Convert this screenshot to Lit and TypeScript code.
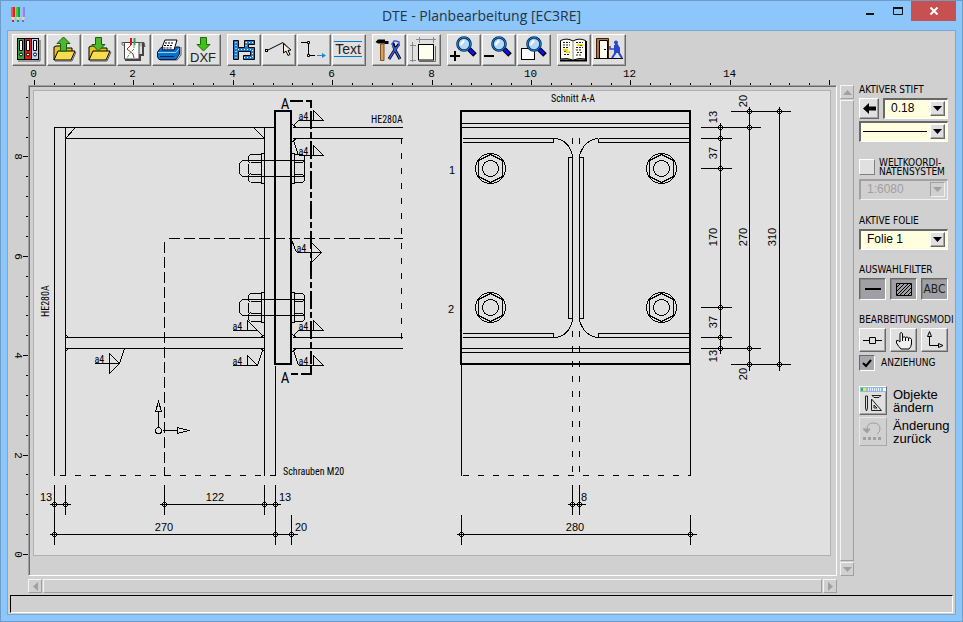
import { LitElement, html, svg, css, type TemplateResult } from "lit";
import { customElement, property } from "lit/decorators.js";

type Tool = { name: string; art: TemplateResult };

const lens = svg`
  <path d="M22 15L28 21" stroke="#000" stroke-width="5"/>
  <path d="M22 15L27 20" stroke="#1010f0" stroke-width="3"/>
  <circle cx="17" cy="10" r="6.5" fill="#b4d8f8" stroke="#0a2a5a" stroke-width="2.6"/>
  <circle cx="17" cy="10" r="6.5" fill="none" stroke="#1a88d8" stroke-width="1"/>
  <path d="M13 10l3-4 2 1-4 5z" fill="#fff"/>`;

const folder = svg`
  <path d="M7 26V13l2-1h4l2 2h10v3" fill="#e8c020" stroke="#000"/>
  <path d="M7 26L11 17H28L24 26Z" fill="#f8dc50" stroke="#000"/>
  <path d="M8 27H25L29 18" fill="none" stroke="#555"/>`;

const groups: Tool[][] = [
  [
    {
      name: "Projekte",
      art: svg`
        <path d="M6 27H28V6" fill="none" stroke="#555"/>
        <rect x="5.5" y="4.5" width="7" height="21" fill="#3fa03f" stroke="#000"/>
        <rect x="12.5" y="4.5" width="7" height="21" fill="#f01414" stroke="#000"/>
        <rect x="19.5" y="4.5" width="7" height="21" fill="#b4d4ff" stroke="#000"/>
        <path d="M7.5 6.5h3v10h-3zM14.5 6.5h3v10h-3zM21.5 6.5h3v10h-3z" fill="#fff" stroke="#000"/>
        <circle cx="9" cy="20.5" r="1.5" fill="#fff" stroke="#000"/>
        <circle cx="16" cy="20.5" r="1.5" fill="#fff" stroke="#000"/>
        <circle cx="23" cy="20.5" r="1.5" fill="#fff" stroke="#000"/>`,
    },
    {
      name: "Laden",
      art: svg`${folder}<path d="M16.5 3L23 9.5H19.5V17H13.5V9.5H10Z" fill="#4cb82c" stroke="#1c5c10"/>`,
    },
    {
      name: "Speichern",
      art: svg`${folder}<path d="M16.5 17L23 10.5H19.5V3.5H13.5V10.5H10Z" fill="#4cb82c" stroke="#1c5c10"/>`,
    },
    {
      name: "Plotten",
      art: svg`
        <path d="M5 8.5H27l1 4h-3" fill="#bbb" stroke="#555"/>
        <path d="M5 8v3h3" fill="none" stroke="#777"/>
        <path d="M8 26H23V21H26V9" fill="none" stroke="#444" stroke-width="2"/>
        <path d="M7.5 8.5H22V25H7.5Z" fill="#fff" stroke="#444"/>
        <path d="M14 4V11" stroke="#e01010" stroke-width="2"/><path d="M17.5 4V11" stroke="#30a050" stroke-width="2"/>
        <path d="M14 11l-4 4 6 5 1 4" fill="none" stroke="#e01010"/>
        <path d="M17 11v4l-4 4-3 5" fill="none" stroke="#30b060" stroke-dasharray="3 1"/>`,
    },
    {
      name: "Drucken",
      art: svg`
        <path d="M8 26H25L29 21V13" fill="none" stroke="#555"/>
        <path d="M9 16L13 6H25L22 16Z" fill="#fff" stroke="#000"/>
        <path d="M13 9h9M12 11.5h9M11.5 14h8" stroke="#000" stroke-dasharray="2 1"/>
        <path d="M5.5 18L9 13.5H11L10 16H22L24 13H27.5V20L24 25.5H7L5.5 23Z" fill="#0a70c8" stroke="#0a1a50"/>
        <path d="M6 18.5H24L27 14.5" fill="none" stroke="#8cd0ff"/><path d="M8 22.5H22" stroke="#0a1a50"/>`,
    },
    {
      name: "DXF",
      art: svg`
        <path d="M16.5 17L23 10.5H19.5V3.5H13.5V10.5H10Z" fill="#40c010" stroke="#1c6c08"/>
        <text x="16" y="28" font-size="13" text-anchor="middle" fill="#222">DXF</text>`,
    },
  ],
  [
    {
      name: "Schraffur",
      art: svg`
        <path d="M6.5 6.5h5v7h6v-7h10v4h-6v3h6v12h-11v-4h7v-4h-12v8h-5z" fill="#1c7cd0" stroke="#000"/>
        <path d="M9 8v16M11 15.500h14M19 8v6M19 8.500h7M25.500 16v8M17 23.500h9" fill="none" stroke="#fff" stroke-dasharray="1 2"/>`,
    },
    {
      name: "Linie",
      art: svg`
        <path d="M6 16L21 8.5L26 14" fill="none" stroke="#000"/>
        <rect x="3.5" y="15.5" width="2" height="2" fill="#fff" stroke="#000"/>
        <path d="M21.5 9.5V19L24 17L26 21.5L28 20.5L26 16.5L29 16Z" fill="#f4ecd8" stroke="#000"/>`,
    },
    {
      name: "Polygon",
      art: svg`
        <path d="M4 8.5H11.5V21.5H18" fill="none" stroke="#000"/>
        <path d="M10.5 7.5h2v2h-2zM10.5 20.5h2v2h-2z" fill="#fff" stroke="#000"/>
        <path d="M20 21.5H27" stroke="#1a88d8"/><path d="M25 19L29 21.5L25 24Z" fill="#1a88d8"/>`,
    },
    {
      name: "Text",
      art: svg`
        <path d="M2 7.5H30M2 22.5H30" stroke="#0a78c8"/>
        <text x="16" y="20" font-size="14" text-anchor="middle" fill="#222">Text</text>`,
    },
  ],
  [
    {
      name: "Werkzeuge",
      art: svg`
        <path d="M3.5 8L6 5.5H13V7H16.5V10H13L12 9.5H6Z" fill="#000"/>
        <path d="M8.5 10h3.5V26.5H8.5Z" fill="#d8a060" stroke="#805020"/>
        <path d="M21 9l1 4 1 3 5 9M27 10l-5 7-5 8" fill="none" stroke="#000" stroke-width="3"/>
        <path d="M24 7h-2l-2 3 2 4 2 0M24 7l3 1v3l-5 6-5 8M22 14l6 11" fill="none" stroke="#3858e0" stroke-width="1.5"/>`,
    },
    {
      name: "Blattformat",
      art: svg`
        <path d="M9 5.5H29M12.5 3v6M26.5 3v6M5.5 8V28M3 11.5h6M3 26.5h6" stroke="#888"/>
        <path d="M12 27.5H28.5V12" fill="none" stroke="#666"/>
        <rect x="11.5" y="10.5" width="15" height="15.5" fill="#fffff0" stroke="#000"/>`,
    },
  ],
  [
    { name: "Vergrößern", art: svg`${lens}<path d="M3 22H13M8 17V27" stroke="#000" stroke-width="2"/>` },
    { name: "Verkleinern", art: svg`${lens}<path d="M2 22H12" stroke="#000" stroke-width="2"/>` },
    {
      name: "Ausschnitt",
      art: svg`<rect x="4.5" y="14.5" width="13" height="11" fill="#fff" stroke="#000"/>${lens}`,
    },
  ],
  [
    {
      name: "Handbuch",
      art: svg`
        <path d="M3 26.5H29V7" fill="none" stroke="#000" stroke-width="2"/>
        <path d="M3.5 6.5Q10 3.5 16 7Q22 3.5 28.5 6.5V25Q22 23.5 16 26Q10 23.5 3.5 25Z" fill="#fffff4" stroke="#000"/>
        <path d="M16 7V26" stroke="#888"/>
        <path d="M6 8.5h7M6 11h7M6 13.5h5M7 20.5h6M19 8.5h7M19 13.5h7M19 16h6M20 18.5h6M19 21h5" stroke="#222" stroke-dasharray="2 1"/>
        <path d="M6 16h5M9 18h4M20 11h6" stroke="#f0e000" stroke-width="2"/><path d="M7 17.5h2M23 11.5h2" stroke="#e02020"/>`,
    },
    {
      name: "Beenden",
      art: svg`
        <path d="M2 24.5H31" stroke="#000"/>
        <path d="M4.5 24V4.5H16.5V24" fill="#b07840" stroke="#402008"/>
        <path d="M7.5 24V6.5H15.5V24" fill="#fffff4" stroke="#000"/><path d="M12 15.5h2" stroke="#000"/>
        <path d="M18 12v3h5" fill="none" stroke="#2848c8" stroke-width="1.5"/>
        <circle cx="24" cy="8.5" r="2" fill="#2848c8"/>
        <path d="M23 11h2l2 3v5l3 5M24 18l-2 3-2 3" fill="none" stroke="#2848c8" stroke-width="2"/>
        <path d="M22 11h4v8h-4z" fill="#2848c8"/>`,
    },
  ],
];

/* One weld mark: flag line with its triangle, the throat size and the leader to the seam. */
const weld = (x: number, y: number, leader: string, both = false) => svg`
  <path d="M${x} ${y}h25M${x + 15} ${y}v-10l10 10${both ? `l-10 10v-10` : ""}${leader}"/>
  <text class="tight" x=${x} y=${y - 1}>a4</text>`;

const bolt = (y: number) => svg`
  <path d="M248 ${y - 8}h-6l-3 3v10l3 3h6M248 ${y - 8}H304M248 ${y + 8}H304
    M250 ${y - 14}H261M250 ${y + 14}H261M250 ${y - 14}l-2 2v5l2 2M250 ${y + 14}l-2 -2v-5l2 -2M248 ${y - 5}v10
    M250 ${y - 6}H261M250 ${y + 6}H261
    M261 ${y - 15}h3v30h-3zM291 ${y - 15}h3v30h-3z
    M294 ${y - 14}h8l2 2v24l-2 2h-8M294 ${y - 6}h8l2 -2M294 ${y + 6}h8l2 2"/>`;

const boltHead = (x: number, y: number) => svg`
  <circle cx=${x} cy=${y} r="15"/><circle cx=${x} cy=${y} r="8"/>
  <path d="M${x} ${y - 14}l12 6v16l-12 6l-12 -6v-16z"/>`;

const dots: [number, number][] = [
  [54, 504], [65, 504], [164, 504], [264, 504], [275, 504], [54, 534], [275, 534], [291, 534],
  [572, 504], [579, 504], [461, 534], [690, 534],
  [720, 127], [720, 138], [720, 168], [720, 307], [720, 337], [720, 348],
  [749, 111], [749, 127], [749, 348], [749, 364], [779, 111], [779, 364],
];

const across: [string, number, number][] = [
  ["13", 46, 501], ["122", 215, 501], ["13", 285, 501], ["270", 164, 531], ["20", 301, 531],
  ["8", 584, 501], ["280", 575, 531], ["1", 452, 174], ["2", 451, 313],
];

const upright: [string, number, number][] = [
  ["13", 717, 117], ["37", 717, 153], ["170", 717, 237], ["37", 717, 322], ["13", 717, 356],
  ["20", 747, 101], ["270", 747, 237], ["20", 747, 374], ["310", 776, 237],
];

@customElement("plan-ruler")
class PlanRuler extends LitElement {
  @property({ type: Boolean }) vertical = false;
  static styles = css`
    :host { display: block; overflow: hidden; }
    svg { display: block; width: 100%; height: 100%; }
    path { stroke: #000; shape-rendering: crispEdges; }
    text { font: 11px "Liberation Mono", monospace; text-anchor: middle; }
  `;
  render() {
    const step = 19.88;
    const count = this.vertical ? 24 : 41;
    const ticks = Array.from({ length: count }, (_, i) => {
      const major = i % 5 === 0;
      const len = major ? 5 : 2;
      if (this.vertical) {
        const y = Math.round(469 - i * step) + 0.5;
        return svg`<path d="M${20 - len} ${y}H20"/>
          ${major ? svg`<text transform="translate(7 ${y}) rotate(90)">${(i / 5) * 2}</text>` : ""}`;
      }
      const x = Math.round(6 + i * step) + 0.5;
      return svg`<path d="M${x} ${19 - len}V19"/>
        ${major && i < 40 ? svg`<text x=${x - 1} y="11">${(i / 5) * 2}</text>` : ""}`;
    });
    return html`<svg aria-hidden="true">${ticks}</svg>`;
  }
}

@customElement("plan-drawing")
class PlanDrawing extends LitElement {
  static styles = css`
    :host { display: block; overflow: hidden; }
    svg { display: block; width: 100%; height: 100%; }
    path, circle { fill: none; stroke: #000; shape-rendering: crispEdges; }
    .heavy path { stroke-width: 2; }
    .d6 { stroke-dasharray: 6 9; }
    .d11 { stroke-dasharray: 11 4; }
    .cut { stroke-dasharray: 18 3 6 3; }
    .open { fill: #e0e0e0; }
    text { font: 11px "Liberation Sans", sans-serif; }
    .mid { text-anchor: middle; }
    .tight { font: 10px "Roboto Condensed", "Open Sans Condensed", "Noto Sans Condensed", "Liberation Sans", sans-serif; }
    .mark { font-size: 15px; }
  `;
  render() {
    return html`<svg role="img" aria-label="Anschlussplan">
      <g transform="translate(-33.5 -90.5)">
        <path d="M54 475V127H274M65 127V475M65 138H264M65 138L74 128M254 128L264 138M264 127V475M275 365V475"/>
        <path d="M292 127H402M292 138H402M65 337H264M65 348H264M292 337H402M292 348H402M65 334l3 3M65 351l3 -3"/>
        <path d="M264 334l-4 3M264 351l-4 -3M292 334l4 3M292 351l4 -3M292 124l4 3M292 141l4 -3"/>
        <path class="d6" d="M401 137V348"/>
        <path class="d11" d="M168 238H402M164 241V475"/>
        <path class="d6" d="M59 475H275M462 475H690M572 330V475M579 330V475"/>
        <path d="M572 137v6M579 137v6"/>
        ${bolt(168)}${bolt(307)}
        ${weld(298, 120, "M298 120l-6 6")} ${weld(298, 155, "M298 155l-5 -15")}
        ${weld(296, 252, "M296 252l-5 -13", true)} ${weld(298, 330, "M298 330l-6 6")}
        ${weld(298, 365, "M298 365l-5 -15")} ${weld(232, 330, "M257 330l6 6")}
        ${weld(232, 365, "M257 365l5 -15")} ${weld(94, 363, "M119 363l5 -15", true)}
        <path d="M158 427V411M162 430H177"/>
        <path class="open" d="M155 411h6l-3 -10zM177 427v6l11 -3z"/>
        <circle class="open" cx="158" cy="430" r="3"/>
        <path d="M49 504H70M159 504H280M49 534H297M54 484V544M65 484V514M164 484V514M264 484V514M275 484V544M291 514V544"/>

        <path d="M461 123H690M461 127H690M462 138H554M462 142H553V138M598 138H690M690 142H598V138"/>
        <path d="M554 138Q568 139 572 155V320Q568 336 554 337M598 138Q584 139 579 155V320Q584 336 598 337"/>
        <path d="M572 157H568V318H572M579 157H583V318H579"/>
        <path d="M462 333H553V337H462M690 333H598V337H690M461 348H690M461 352H690M461 364V475M690 364V475"/>
        ${boltHead(490, 168)}${boltHead(661, 168)}${boltHead(490, 307)}${boltHead(661, 307)}
        <path d="M567 504H585M572 484V514M579 484V514M456 534H696M461 514V544M690 514V544"/>
        <path d="M720 122V353M749 106V370M779 106V370M700 127H760M700 138H731M700 168H731M700 307H731
          M700 337H731M700 348H760M730 111H790M730 364H790"/>
        ${dots.map(([x, y]) => svg`<circle cx=${x} cy=${y} r="2"/>`)}
      </g>
      <g class="heavy" transform="translate(-34 -91)">
        <path d="M275 111H291V364H275ZM461 111H690V364H461Z"/>
        <path d="M290 101H303M306 101H311V108M291 374H298M301 374H311V366"/>
        <path class="cut" d="M311 111V364"/>
      </g>
      <g transform="translate(-34 -91)">
        ${across.map(([t, x, y]) => svg`<text class="mid" x=${x} y=${y}>${t}</text>`)}
        ${upright.map(([t, x, y]) => svg`<text class="mid" transform="translate(${x} ${y}) rotate(-90)">${t}</text>`)}
        <text class="tight" x="371" y="123">HE280A</text>
        <text class="tight" transform="translate(49 317) rotate(-90)">HE280A</text>
        <text class="tight" x="283" y="475">Schrauben M20</text>
        <text class="tight" x="551" y="102">Schnitt A-A</text>
        <text class="tight mark mid" x="285" y="109">A</text>
        <text class="tight mark mid" x="285" y="383">A</text>
      </g>
    </svg>`;
  }
}

@customElement("app-root")
class AppRoot extends LitElement {
  static styles = css`
    :host {
      display: flex; flex-direction: column; box-sizing: border-box; height: 100vh;
      border: 1px solid #6c9cc8; background: #8cc6fa; color: #000;
      font: 12px "Liberation Sans", sans-serif;
    }
    * { box-sizing: border-box; }
    button, select, input { font: inherit; color: inherit; margin: 0; padding: 0; border-radius: 0; appearance: none; }
    svg { display: block; }
    .title { display: grid; grid-template-columns: 132px 1fr 132px; height: 29px; flex: none; }
    .title h1 { margin: 0; font: 14px/29px "Open Sans", "Noto Sans", sans-serif; color: #243444; text-align: center; white-space: nowrap; }
    .logo { margin: 5px 0 0 9px; }
    .wins { display: flex; justify-content: flex-end; height: 20px; margin-right: 6px; }
    .wins button { width: 27px; border: 0; background: none; display: grid; place-items: center; }
    .wins .close { width: 45px; background: #c75050; }
    .client {
      flex: 1; min-height: 0; margin: 0 6px 6px; border: 1px solid #78a8d4; background: #d0d0d0;
      display: flex; flex-direction: column;
    }
    .tools { display: flex; gap: 6px; padding: 3px 0 0 4px; flex: none; }
    .group { display: flex; gap: 1px; }
    .raised, .tools button {
      background: #e0e0e0; border: 1px solid; border-color: #fff #686868 #686868 #fff;
      box-shadow: inset -1px -1px #a4a4a4; display: grid; place-items: center;
    }
    .tools button { width: 34px; height: 32px; }
    .work {
      flex: 1; min-height: 0; display: grid;
      grid-template: 19px minmax(0, 1fr) 14px / 20px minmax(0, 1fr) 14px 101px;
      grid-template-areas: ". top . side" "left plan vbar side" ". hbar . side";
    }
    .top { grid-area: top; }
    .left { grid-area: left; }
    .plan {
      grid-area: plan; margin: 0 3px 3px 0; padding: 4px 5px 19px 4px; display: flex;
      border: 1px solid; border-color: #a0a0a0 #fff #fff #a0a0a0; box-shadow: inset 1px 1px #686868;
    }
    plan-drawing { flex: 1; border: 1px solid #b0b0b0; background: #e0e0e0; }
    .bar { display: flex; gap: 1px; }
    .vbar { grid-area: vbar; flex-direction: column; margin-bottom: 3px; }
    .hbar { grid-area: hbar; margin-right: 3px; }
    .bar button, .track { border: 1px solid; border-color: #f4f4f4 #a0a0a0 #a0a0a0 #f4f4f4; background: #d0d0d0; }
    .bar button { flex: none; width: 14px; height: 14px; display: grid; place-items: center; }
    .track { flex: 1; }
    .side { grid-area: side; padding: 18px 7px 0 5px; display: flex; flex-direction: column; gap: 15px; }
    .block { display: flex; flex-direction: column; gap: 2px; }
    .near { margin-top: -1px; }
    .cap { margin: 0; font: 10px/12px "DejaVu Sans Condensed", "Liberation Sans", sans-serif; white-space: nowrap; }
    .row { display: flex; gap: 4px; align-items: center; }
    .back { width: 20px; height: 21px; flex: none; }
    .combo {
      position: relative; flex: 1 0 auto; min-width: 0; height: 21px; background: #ffffdf;
      border: solid; border-width: 2px 1px 1px 2px; border-color: #686868 #fff #fff #686868;
      display: flex; align-items: stretch;
    }
    .row .combo { flex: 1; }
    .combo select { flex: 1; min-width: 0; border: 0; background: none; padding: 0 20px 2px 6px; line-height: 16px; }
    .combo .drop { position: absolute; right: 2px; top: 1px; width: 15px; height: 15px; pointer-events: none; }
    .combo .ink { position: absolute; left: 2px; top: 8px; width: 64px; height: 1px; background: #000; pointer-events: none; }
    .combo.off { background: #d0d0d0; color: #a0a0a0; border-color: #a0a0a0 #f0f0f0 #f0f0f0 #a0a0a0; }
    .combo.off select { color: #a0a0a0; opacity: 1; }
    .combo.off .drop { background: #d0d0d0; border-color: #a0a0a0 #f0f0f0 #f0f0f0 #a0a0a0; box-shadow: none; }
    .check { display: flex; align-items: center; gap: 4px; height: 20px; }
    .check.low { height: 18px; gap: 6px; }
    .box { display: grid; place-items: center; width: 16px; height: 16px; flex: none; }
    .box input { width: 16px; height: 16px; background: #e0e0e0; border: 1px solid; border-color: #fff #808080 #808080 #fff; grid-area: 1 / 1; }
    .box input:checked { background: #a8a8ac; border-color: #686868 #fff #fff #686868; }
    .box svg { grid-area: 1 / 1; pointer-events: none; z-index: 1; }
    .two { line-height: 9px; }
    .trio { display: grid; grid-template-columns: repeat(3, 27px); gap: 4px; }
    .trio button { height: 24px; }
    .trio .down { height: 22px; background: #a0a0a4; border-color: #686868 #fff #fff #686868; box-shadow: inset 1px 1px #888; }
    .letters { font: 12px "DejaVu Sans Condensed", sans-serif; color: #222; }
    .acts { display: flex; flex-direction: column; gap: 2px; }
    .act { display: flex; align-items: center; gap: 6px; font-size: 13px; line-height: 13px; }
    .act button { width: 28px; height: 29px; flex: none; }
    .act button:disabled { background: #d0d0d0; border-color: #e8e8e8 #a8a8a8 #a8a8a8 #e8e8e8; box-shadow: none; }
    .status { flex: none; height: 18px; margin: 2px 2px 1px; border: 1px solid; border-color: #000 #fff #fff #000; }
  `;

  private arrow(d: string, fill = "#000") {
    return html`<svg width="9" height="9" viewBox="0 0 9 9" aria-hidden="true"><path d=${d} fill=${fill} /></svg>`;
  }

  private drop(off = false) {
    return html`<span class="drop raised">${this.arrow("M0 2H9L4.5 7Z", off ? "#a0a0a0" : "#000")}</span>`;
  }

  render() {
    const up = "M0 7H9L4.5 2Z", down = "M0 2H9L4.5 7Z", left = "M7 0V9L2 4.5Z", right = "M2 0V9L7 4.5Z";
    return html`
      <header class="title">
        <svg class="logo" width="16" height="18" viewBox="0 0 16 18" aria-hidden="true">
          <path d="M3 1V11" stroke="#e02020" stroke-width="4" /><path d="M2 1V11" stroke="#ff9090" />
          <path d="M8 1V11" stroke="#10a820" stroke-width="4" /><path d="M7 1V11" stroke="#70f080" />
          <path d="M13 1V11" stroke="#8888f0" stroke-width="4" /><path d="M12 1V11" stroke="#d8d8ff" />
          <path d="M1 11H5L3 16ZM6 11H10L8 16ZM11 11H15L13 16Z" fill="#e8d8a0" />
          <path d="M3 14v2" stroke="#e02020" stroke-width="2" /><path d="M8 14v2" stroke="#10a820" stroke-width="2" />
          <path d="M13 14v2" stroke="#6868f0" stroke-width="2" />
        </svg>
        <h1>DTE - Planbearbeitung [EC3RE]</h1>
        <div class="wins">
          <button aria-label="Minimieren"><svg width="9" height="9"><path d="M0 7H8" stroke="#111" stroke-width="2" /></svg></button>
          <button aria-label="Maximieren"><svg width="10" height="8"><path d="M.5 1H9.5V7.5H.5Z" fill="none" stroke="#111" /><path d="M0 1H10" stroke="#111" stroke-width="2" /></svg></button>
          <button class="close" aria-label="Schließen"><svg width="8" height="8"><path d="M.5 .5L7.5 7.5M7.5 .5L.5 7.5" stroke="#fff" stroke-width="2" /></svg></button>
        </div>
      </header>
      <main class="client">
        <nav class="tools">
          ${groups.map((g) => html`<div class="group">
            ${g.map((t) => html`<button aria-label=${t.name}>
              <svg width="32" height="30" viewBox="1 1 32 30">${t.art}</svg>
            </button>`)}
          </div>`)}
        </nav>
        <section class="work">
          <plan-ruler class="top"></plan-ruler>
          <plan-ruler class="left" vertical></plan-ruler>
          <div class="plan"><plan-drawing></plan-drawing></div>
          <div class="bar vbar">
            <button aria-label="Nach oben">${this.arrow(up, "#a0a0a0")}</button>
            <div class="track"></div>
            <button aria-label="Nach unten">${this.arrow(down, "#a0a0a0")}</button>
          </div>
          <div class="bar hbar">
            <button aria-label="Nach links">${this.arrow(left, "#a0a0a0")}</button>
            <div class="track"></div>
            <button aria-label="Nach rechts">${this.arrow(right, "#a0a0a0")}</button>
          </div>
          <aside class="side">
            <div class="block">
              <label class="cap" for="pen">AKTIVER STIFT</label>
              <div class="row">
                <button class="back raised" aria-label="Stift übernehmen">
                  <svg width="13" height="11"><path d="M0 5.5L6 0V3.5H13V7.5H6V11Z" fill="#000" /></svg>
                </button>
                <div class="combo"><select id="pen"><option>0.18</option></select>${this.drop()}</div>
              </div>
              <div class="combo"><select aria-label="Linienart"><option aria-label="Volllinie"></option></select><span class="ink"></span>${this.drop()}</div>
            </div>
            <div class="block">
              <label class="check"><span class="box"><input type="checkbox" /></span><span class="cap two">WELTKOORDI-<br />NATENSYSTEM</span></label>
              <div class="combo off"><select aria-label="Maßstab" disabled><option>1:6080</option></select>${this.drop(true)}</div>
            </div>
            <div class="block">
              <label class="cap" for="layer">AKTIVE FOLIE</label>
              <div class="combo"><select id="layer"><option>Folie 1</option></select>${this.drop()}</div>
            </div>
            <div class="block near">
              <h2 class="cap">AUSWAHLFILTER</h2>
              <div class="trio">
                <button class="raised down" aria-label="Linien"><svg width="16" height="2"><path d="M0 1H16" stroke="#000" stroke-width="2" /></svg></button>
                <button class="raised down" aria-label="Schraffuren"><svg width="16" height="13" fill="none" stroke="#000">
                  <path d="M.5 .5H15.5V12.5H.5Z" /><path d="M1 4L4 1M1 8L8 1M1 12L12 1M4 12L15 1M8 12L15 5M12 12L15 9" /></svg></button>
                <button class="raised down letters">ABC</button>
              </div>
            </div>
            <div class="block near">
              <h2 class="cap">BEARBEITUNGSMODI</h2>
              <div class="trio">
                <button class="raised" aria-label="Punkt"><svg width="19" height="8" fill="none" stroke="#000"><path d="M0 4.5H6M12 4.5H19M6.5 1.5H12.5V7.5H6.5Z" /></svg></button>
                <button class="raised" aria-label="Hand"><svg width="18" height="19" viewBox="0 0 18 19" fill="#f0f0f0" stroke="#000">
                  <path d="M5 11V2.5Q6 .5 7.5 2.5V7Q9 4.5 10.5 6.5Q12 5 13.5 7Q15.5 6 16.5 8.5V13Q16 16 14 18H6Q4 16 1.5 12V9.5Q3.5 9 5 11ZM7.5 7V10M10.5 6.5V10M13.5 7V10" /></svg></button>
                <button class="raised" aria-label="Achsen"><svg width="18" height="18" fill="none" stroke="#000"><path d="M3.5 5V14.5H12M1.5 5.5H5.5L3.5 .5ZM12.5 12.5V16.5L17 14.5Z" /></svg></button>
              </div>
              <label class="check low"><span class="box"><input type="checkbox" checked /><svg width="10" height="9"><path d="M1 4L4 7L9 1" fill="none" stroke="#000" stroke-width="2" /></svg></span><span class="cap">ANZIEHUNG</span></label>
            </div>
            <div class="acts near">
              <div class="act">
                <button class="raised" aria-labelledby="edit"><svg width="26" height="27" viewBox="0 0 26 27" fill="none">
                  <path d="M0 0H26V5H0Z" fill="#90b8e0" /><path d="M1 2.5H3" stroke="#30c030" stroke-width="3" /><path d="M3 2.5H6" stroke="#f0f020" stroke-width="3" />
                  <path d="M8 2.5H21" stroke="#e0f0ff" stroke-width="3" stroke-dasharray="1 1" /><path d="M23 1h3v3h-3z" fill="#fff" />
                  <path d="M5.5 9V21L6.5 24L7.5 21V9ZM11.5 12V23.5H21.5ZM14 18V21H17ZM12 8.5H21L19 10.5H14Z" stroke="#222" /></svg></button>
                <span id="edit">Objekte<br />ändern</span>
              </div>
              <div class="act">
                <button class="raised" disabled aria-labelledby="undo"><svg width="26" height="27" viewBox="0 0 26 27" fill="none" stroke="#a0a0a0">
                  <path d="M7 14V10Q8 5 13 5Q20 5 20 11Q20 14 17 16" /><path d="M3 11H10L7 15Z" fill="#a0a0a0" /><path d="M3 20.5H23" stroke-width="3" stroke-dasharray="3 2" /></svg></button>
                <span id="undo">Änderung<br />zurück</span>
              </div>
            </div>
          </aside>
        </section>
        <footer class="status"></footer>
      </main>`;
  }
}
